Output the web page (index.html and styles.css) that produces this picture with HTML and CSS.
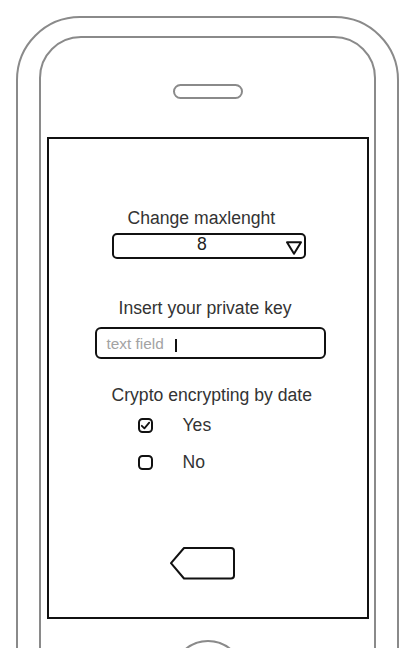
FILE: index.html
```html
<!DOCTYPE html>
<html>
<head>
<meta charset="utf-8">
<link rel="stylesheet" href="styles.css">
</head>
<body>
<div class="phone">
  <div class="bezel">
    <div class="speaker"></div>
    <div class="screen">
      <div class="label label-max">Change maxlenght</div>
      <div class="dropdown">
        <span class="dropdown-value">8</span>
        <svg class="dropdown-arrow" width="18" height="16" viewBox="0 0 18 16"><path d="M2 3.3 H16 L9 14.7 Z" fill="none" stroke="#111" stroke-width="2" stroke-linejoin="round"/></svg>
      </div>
      <div class="label label-key">Insert your private key</div>
      <div class="textfield">
        <span class="placeholder">text field</span>
        <span class="caret"></span>
      </div>
      <div class="label label-crypto">Crypto encrypting by date</div>
      <div class="option option-yes">
        <svg class="check" width="15" height="15" viewBox="0 0 15 15"><rect x="1" y="1" width="13" height="13" rx="3.5" fill="none" stroke="#111" stroke-width="2"/><path d="M3.8 7.8 L6.4 10.3 L11.2 4.6" fill="none" stroke="#111" stroke-width="1.8" stroke-linecap="round" stroke-linejoin="round"/></svg>
        <span class="option-text">Yes</span>
      </div>
      <div class="option option-no">
        <svg class="check" width="15" height="15" viewBox="0 0 15 15"><rect x="1" y="1" width="13" height="13" rx="3.5" fill="none" stroke="#111" stroke-width="2"/></svg>
        <span class="option-text">No</span>
      </div>
      <svg class="back" width="66" height="34" viewBox="0 0 66 34"><path d="M1 17.2 L14 2 H61 A3 3 0 0 1 64 5 V29.5 A3 3 0 0 1 61 32.5 H14 Z" fill="none" stroke="#111" stroke-width="2" stroke-linejoin="round"/></svg>
    </div>
    <div class="home"></div>
  </div>
</div>
</body>
</html>
```
FILE: styles.css
```css
html, body {
  margin: 0;
  padding: 0;
  background: #fff;
}
body {
  width: 412px;
  height: 648px;
  overflow: hidden;
  font-family: "Liberation Sans", Arial, sans-serif;
  color: #333;
}
.phone {
  box-sizing: border-box;
  margin: 16px 0 0 16px;
  width: 383px;
  height: 760px;
  border: 2px solid #8a8a8a;
  border-radius: 64px;
  padding: 18px 21px 0 21px;
}
.bezel {
  box-sizing: border-box;
  height: 720px;
  border: 2px solid #8a8a8a;
  border-radius: 42px;
  display: flex;
  flex-direction: column;
  align-items: center;
}
.speaker {
  box-sizing: border-box;
  margin-top: 46px;
  width: 70px;
  height: 15px;
  border: 2px solid #8a8a8a;
  border-radius: 8px;
}
.screen {
  box-sizing: border-box;
  margin-top: 38px;
  width: 322px;
  height: 482px;
  border: 2px solid #111;
  display: flex;
  flex-direction: column;
  align-items: flex-start;
}
.home {
  box-sizing: border-box;
  margin-top: 21px;
  width: 72px;
  height: 72px;
  border: 2px solid #8a8a8a;
  border-radius: 50%;
}
.label {
  font-size: 17.6px;
  line-height: 21px;
  white-space: nowrap;
}
.label-max {
  margin-top: 69px;
  margin-left: 79px;
}
.dropdown {
  box-sizing: border-box;
  margin-top: 4px;
  margin-left: 63px;
  width: 194px;
  height: 26px;
  border: 2px solid #111;
  border-radius: 5px;
  display: flex;
  align-items: flex-start;
}
.dropdown-value {
  flex: 1;
  text-align: center;
  padding-left: 6px;
  font-size: 17.6px;
  line-height: 18px;
  color: #222;
}
.dropdown-arrow {
  display: block;
  margin-top: 4px;
  margin-right: 1px;
}
.label-key {
  margin-top: 39px;
  margin-left: 70px;
}
.textfield {
  box-sizing: border-box;
  margin-top: 8px;
  margin-left: 46px;
  width: 231px;
  height: 32px;
  border: 2px solid #111;
  border-radius: 6px;
  padding: 1px 0 0 10px;
  display: flex;
  align-items: flex-start;
}
.placeholder {
  font-size: 15.4px;
  line-height: 27px;
  color: #a3a3a3;
}
.caret {
  display: block;
  margin-top: 9px;
  margin-left: 11px;
  width: 2px;
  height: 13px;
  background: #111;
}
.label-crypto {
  margin-top: 26px;
  margin-left: 63px;
}
.option {
  display: flex;
  align-items: center;
  margin-left: 89px;
  height: 21px;
}
.option-yes {
  margin-top: 9px;
}
.option-no {
  margin-top: 16px;
}
.check {
  display: block;
}
.option-text {
  margin-left: 30px;
  font-size: 17.6px;
  line-height: 21px;
}
.back {
  display: block;
  margin-top: 73px;
  margin-left: 121px;
}
```
